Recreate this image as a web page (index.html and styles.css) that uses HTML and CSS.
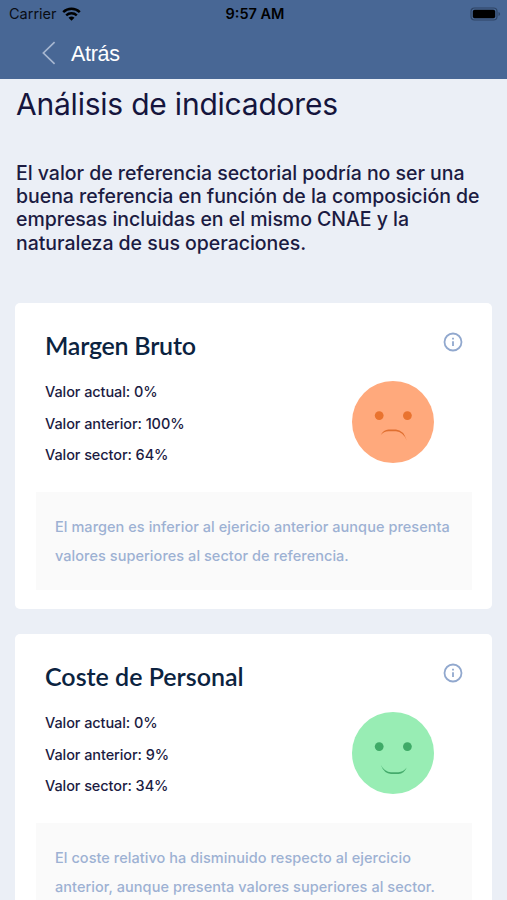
FILE: index.html
```html
<!DOCTYPE html>
<html lang="es">
<head>
    <title>Análisis de indicadores</title>
    <meta charset="UTF-8">
    <link rel="stylesheet" href="styles.css">
</head>
<body>
    <header class="header">
        <div class="status">
            <div class="carrier">
                <span>Carrier</span>
                <svg width="19" height="14" viewBox="0 0 19 14">
                    <path d="M1.2 5.2a12 12 0 0 1 16.6 0" fill="none" stroke="#000" stroke-width="2.5"/>
                    <path d="M4.2 8.4a7.6 7.6 0 0 1 10.6 0" fill="none" stroke="#000" stroke-width="2.4"/>
                    <path d="M6.5 10.8a4.4 4.4 0 0 1 6 0l-3 3z"/>
                </svg>
            </div>
            <span class="time">9:57 AM</span>
            <svg class="battery" width="31" height="14" viewBox="0 0 31 14">
                <rect x="1" y="1" width="26" height="12" rx="3.5" fill="none" stroke="#2f4566" stroke-width="1.2"/>
                <rect x="2.8" y="2.7" width="22.4" height="8.6" rx="1.8"/>
                <path d="M28.5 5v4q1.6-.6 1.6-2t-1.6-2z" fill="#2f4566"/>
            </svg>
        </div>
        <div class="nav">
            <svg width="14" height="24" viewBox="0 0 14 24">
                <path d="M12.6 1.2L1.4 12l11.2 10.8" fill="none" stroke="#a6b6d0" stroke-width="1.7"/>
            </svg>
            <span>Atrás</span>
        </div>
    </header>

    <main>
        <h1>Análisis de indicadores</h1>
        <p class="intro">El valor de referencia sectorial podría no ser una<br>buena referencia en función de la composición de<br>empresas incluidas en el mismo CNAE y la<br>naturaleza de sus operaciones.</p>

        <section class="card">
            <div class="card-head">
                <h2 class="margen">Margen Bruto</h2>
                <svg class="info" width="20" height="20" viewBox="0 0 20 20">
                    <circle cx="10" cy="10" r="8.5"/>
                    <path d="M10 9.2v4.8M10 5.8v1.8"/>
                </svg>
            </div>
            <div class="card-body">
                <ul class="values">
                    <li>Valor actual: 0%</li>
                    <li>Valor anterior: 100%</li>
                    <li>Valor sector: 64%</li>
                </ul>
                <svg class="face" width="82" height="82" viewBox="0 0 82 82">
                    <circle cx="41" cy="41" r="41" fill="#ffa97c"/>
                    <circle cx="27.2" cy="34.6" r="4.4" fill="#e9732f"/>
                    <circle cx="55.4" cy="34.6" r="4.4" fill="#e9732f"/>
                    <path d="M28.6 54.2Q31.5 48.8 36.5 48.5H44Q51.5 49 54.8 59.5Q50.8 50.7 44 50.3H36.5Q31.8 50.3 28.6 54.2z" fill="#e06f30"/>
                </svg>
            </div>
            <p class="note">El margen es inferior al ejericio anterior aunque presenta<br>valores superiores al sector de referencia.</p>
        </section>

        <section class="card">
            <div class="card-head">
                <h2>Coste de Personal</h2>
                <svg class="info" width="20" height="20" viewBox="0 0 20 20">
                    <circle cx="10" cy="10" r="8.5"/>
                    <path d="M10 9.2v4.8M10 5.8v1.8"/>
                </svg>
            </div>
            <div class="card-body">
                <ul class="values">
                    <li>Valor actual: 0%</li>
                    <li>Valor anterior: 9%</li>
                    <li>Valor sector: 34%</li>
                </ul>
                <svg class="face" width="82" height="82" viewBox="0 0 82 82">
                    <circle cx="41" cy="41" r="41" fill="#98edb4"/>
                    <circle cx="27.2" cy="34.6" r="4.4" fill="#3faa67"/>
                    <circle cx="55.4" cy="34.6" r="4.4" fill="#3faa67"/>
                    <path d="M28.8 53Q32.3 61.8 39 62H46.5Q52 61.8 54.8 55.6Q51.2 60.1 46.5 60.2H39Q32.8 60.2 28.8 53z" fill="#45ab6c"/>
                </svg>
            </div>
            <p class="note">El coste relativo ha disminuido respecto al ejercicio<br>anterior, aunque presenta valores superiores al sector.</p>
        </section>
    </main>
</body>
</html>
```
FILE: styles.css
```css
* {
    box-sizing: border-box;
}
body {
    margin: 0;
    height: 900px;
    overflow: hidden;
    background: #ebeff6;
    color: #15153d;
    font-family: Inter, sans-serif;
}
h1, h2, p, ul {
    margin: 0;
    padding: 0;
}
svg {
    display: block;
}
.header {
    height: 79px;
    background: #486795;
}
.status {
    display: grid;
    grid-template-columns: 1fr auto 1fr;
    align-items: center;
    height: 27px;
    padding: 0 6px 0 9px;
    color: #0a0d14;
    font-size: 14.5px;
}
.carrier {
    display: flex;
    align-items: center;
    gap: 5px;
}
.time {
    color: #000;
    font-weight: 600;
}
.battery {
    justify-self: end;
}
.nav {
    display: flex;
    align-items: center;
    gap: 15px;
    height: 52px;
    padding-left: 42px;
    color: #fff;
    font: 21.5px "Liberation Sans", sans-serif;
    letter-spacing: -0.3px;
}
.nav span {
    padding-top: 3px;
}
main {
    padding: 0 15px;
}
h1 {
    padding: 7px 0 0 1px;
    font-size: 30px;
    font-weight: 430;
    letter-spacing: -0.22px;
    line-height: 37px;
}
.intro {
    margin-top: 39px;
    padding-left: 1px;
    color: #1b1b42;
    font-size: 19.5px;
    font-weight: 500;
    letter-spacing: -0.03px;
    line-height: 23.2px;
    white-space: nowrap;
}
.card {
    height: 306px;
    margin-bottom: 25px;
    padding: 28px 20px 0 21px;
    background: #fff;
    border-radius: 5px;
}
.intro + .card {
    margin-top: 48px;
}
.card-head {
    display: flex;
    justify-content: space-between;
    padding: 0 9px;
}
h2 {
    color: #0b2340;
    font-family: Lato, sans-serif;
    font-size: 25px;
    font-weight: 600;
    line-height: 28px;
}
.margen {
    letter-spacing: -0.25px;
}
.info {
    margin-top: 1px;
    fill: none;
    stroke: #91a8ce;
    stroke-width: 1.8;
}
.card-body {
    display: flex;
    justify-content: space-between;
    height: 133px;
    padding: 17px 38px 0 9px;
}
.values {
    color: #1b1b42;
    list-style: none;
    font-size: 14.5px;
    font-weight: 500;
    letter-spacing: -0.08px;
    line-height: 31.8px;
}
.face {
    margin-top: 5px;
}
.note {
    height: 98px;
    padding: 20px 0 0 19px;
    background: #fafafa;
    color: #9db1d3;
    font-size: 14.5px;
    font-weight: 500;
    letter-spacing: 0.05px;
    line-height: 29.3px;
    white-space: nowrap;
}
```
